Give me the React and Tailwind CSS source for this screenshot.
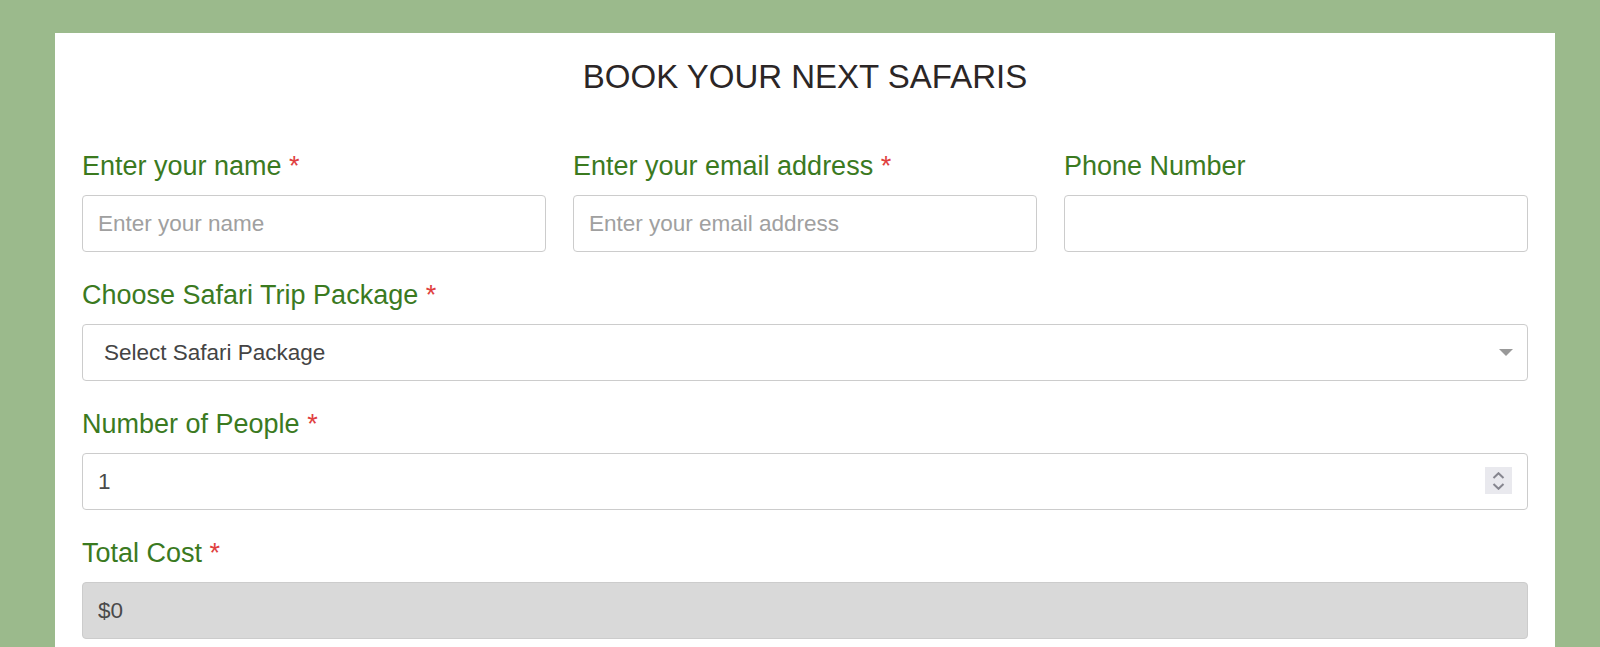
import { useState } from "react";

const PACKAGES = ["Serengeti Explorer", "Masai Mara Classic", "Kruger Big Five"];

function Label({ children, required }) {
  return (
    <label className="block text-[27px] leading-[31px] text-[#3b7a1f] mb-[13px]">
      {children}
      {required && <span className="text-[#e04040]"> *</span>}
    </label>
  );
}

const inputCls =
  "w-full h-[57px] border border-[#cccccc] rounded-[4px] px-[15px] text-[22.5px] text-[#4a4a4a] placeholder:text-[#a0a0a0] outline-none";

export default function App() {
  const [people, setPeople] = useState(1);

  return (
    <div
      className="min-h-screen bg-[#9bba8c] pt-[33px] pl-[55px] pr-[45px]"
      style={{ fontFamily: '"Liberation Sans", Arial, sans-serif' }}
    >
      <form className="bg-white px-[27px] pt-[25px] pb-[40px]">
        <h1 className="text-center text-[33px] leading-[37px] text-[#2b2626] mb-[56px]">
          BOOK YOUR NEXT SAFARIS
        </h1>

        <div className="grid grid-cols-3 gap-x-[27px] mb-[28px]">
          <div>
            <Label required>Enter your name</Label>
            <input className={`${inputCls} bg-white`} placeholder="Enter your name" />
          </div>
          <div>
            <Label required>Enter your email address</Label>
            <input className={`${inputCls} bg-white`} placeholder="Enter your email address" />
          </div>
          <div>
            <Label>Phone Number</Label>
            <input className={`${inputCls} bg-white`} />
          </div>
        </div>

        <div className="mb-[28px]">
          <Label required>Choose Safari Trip Package</Label>
          <div className="relative">
            <select
              className={`${inputCls} bg-white appearance-none pl-[21px] text-[#444]`}
              defaultValue=""
            >
              <option value="">Select Safari Package</option>
              {PACKAGES.map((p) => (
                <option key={p}>{p}</option>
              ))}
            </select>
            <span className="pointer-events-none absolute right-[15px] top-[25px] w-0 h-0 border-l-[7px] border-r-[7px] border-t-[7px] border-l-transparent border-r-transparent border-t-[#999]" />
          </div>
        </div>

        <div className="mb-[28px]">
          <Label required>Number of People</Label>
          <div className="relative">
            <input
              className={`${inputCls} bg-white`}
              value={people}
              onChange={(e) => setPeople(e.target.value)}
            />
            <div className="absolute right-[16px] top-[14px] w-[27px] h-[27px] bg-[#e9e9ee] flex flex-col items-center justify-center gap-[4px]">
              <svg width="13" height="7" viewBox="0 0 13 7" fill="none">
                <path d="M1.5 6 L6.5 1.2 L11.5 6" stroke="#86868f" strokeWidth="2" />
              </svg>
              <svg width="13" height="7" viewBox="0 0 13 7" fill="none">
                <path d="M1.5 1 L6.5 5.8 L11.5 1" stroke="#86868f" strokeWidth="2" />
              </svg>
            </div>
          </div>
        </div>

        <div>
          <Label required>Total Cost</Label>
          <input
            className={`${inputCls} bg-[#d9d9d9]`}
            value="$0"
            readOnly
          />
        </div>
      </form>
    </div>
  );
}
